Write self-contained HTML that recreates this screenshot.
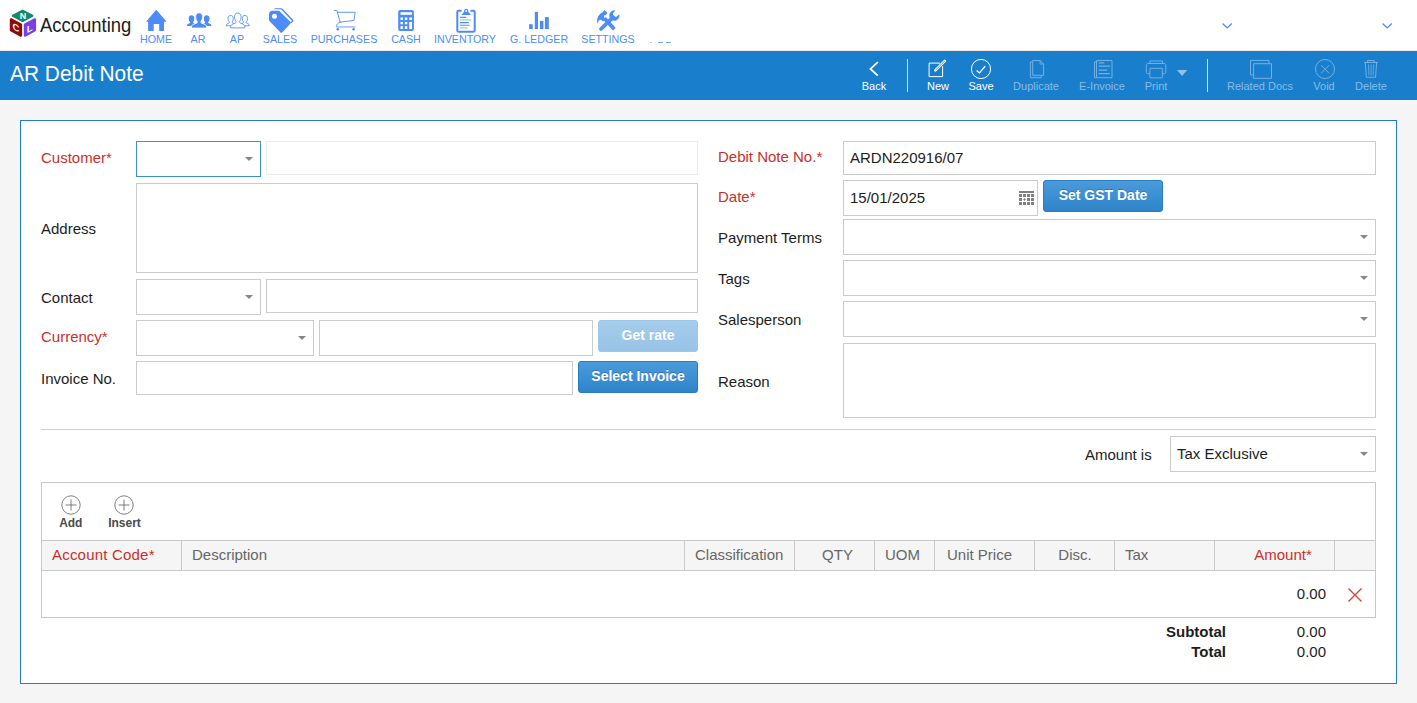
<!DOCTYPE html>
<html lang="en">
<head>
<meta charset="utf-8">
<title>AR Debit Note</title>
<style>
*{box-sizing:border-box;margin:0;padding:0}
html,body{width:1417px;height:703px;overflow:hidden}
body{background:#f5f5f5;font-family:"Liberation Sans",Arial,Helvetica,sans-serif;font-size:15px;color:#111;position:relative}
.abs{position:absolute}
/* top nav */
#nav{position:absolute;left:0;top:0;width:1417px;height:50px;background:#fff}
#brand{position:absolute;left:39.6px;top:13.1px;font-size:20.4px;line-height:24px;color:#1c1c1c;transform:scaleX(0.905);transform-origin:0 0;white-space:nowrap}
.ni{position:absolute;top:0;height:50px;color:#4d8ef7;text-align:center}
.ni svg{position:absolute;left:50%;transform:translateX(-50%)}
.ni span{position:absolute;left:50%;transform:translateX(-50%);top:33px;font-size:10.7px;line-height:13px;white-space:nowrap;letter-spacing:0}
/* blue bar */
#bar{position:absolute;left:0;top:50px;width:1417px;height:50px;background:#197ecc;border-top:1px solid #f1e8e1}
#title{position:absolute;left:9.7px;top:9.7px;color:#fff;font-size:22.6px;line-height:26px;transform:scaleX(0.925);transform-origin:0 0;white-space:nowrap}
.tb{position:absolute;top:0;height:49px;color:#fff}
.tb span{position:absolute;left:50%;transform:translateX(-50%);top:28px;font-size:11px;line-height:14px;white-space:nowrap}
.tb svg{position:absolute;left:50%;transform:translateX(-50%)}
.tb.dis{color:#86bce8}
.sep{position:absolute;top:8px;width:1px;height:33px;background:#cfe3f4}
/* panel */
#panel{position:absolute;left:20px;top:120px;width:1377px;height:564px;background:#fff;border:1px solid #1f7dcb}
.lbl{position:absolute;font-size:15px;line-height:18px;color:#1d1d1d;white-space:nowrap}
.req{color:#c9302c}
.inp{position:absolute;background:#fff;border:1px solid #cbcbcb;font-size:15px;color:#1d1d1d;line-height:18px}
.inp .v{position:absolute;left:6px;top:50%;transform:translateY(-50%);white-space:nowrap}
.arrow{position:absolute;right:7px;top:50%;margin-top:-2px;width:0;height:0;border-left:4.2px solid transparent;border-right:4.2px solid transparent;border-top:4.5px solid #868686}
.btn{position:absolute;background:#2e86cf;border:1px solid #2a7cc2;border-radius:3px;color:#fff;font-weight:bold;font-size:14px;text-align:center;line-height:28px;background-image:linear-gradient(#4a9bdb,#2e84ca);text-shadow:0 -1px 0 rgba(0,0,0,.2)}
.btn.dis{background:#9cc6e8;border-color:#9cc7e9;background-image:linear-gradient(#a5cdec,#98c3e6);text-shadow:0 -1px 0 rgba(0,0,0,.08)}
.hc{position:absolute;top:541px;height:29px;border-left:1px solid #c9c9c9;font-size:15px;line-height:28px;color:#666;white-space:nowrap}
.hc.req{color:#c9302c}
</style>
</head>
<body>
<div id="nav">

  <svg class="abs" style="left:8px;top:8px" width="30" height="32" viewBox="8 8 30 32">
    <path d="M13 15.800 L22.650 10.750 L32.300 15.800 L22.650 20.850 Z" fill="#148a68" stroke="#148a68" stroke-width="2.400" stroke-linejoin="round"/>
    <path d="M11 19.400 L20.900 24.600 L20.900 35.600 L11 30.200 Z" fill="#8f0a0a" stroke="#8f0a0a" stroke-width="2.400" stroke-linejoin="round"/>
    <path d="M34.900 19.400 L25 24.600 L25 35.600 L34.900 30.200 Z" fill="#7a40e2" stroke="#7a40e2" stroke-width="2.400" stroke-linejoin="round"/>
    <text x="22.900" y="18.900" font-family="Liberation Sans, sans-serif" font-size="9" font-weight="bold" fill="#fff" text-anchor="middle">N</text>
    <text transform="matrix(1 0.530 0 1 16 30.700)" x="0" y="0" font-family="Liberation Sans, sans-serif" font-size="9.500" font-weight="bold" fill="#fff" text-anchor="middle">C</text>
    <text transform="matrix(1 -0.530 0 1 29.700 31.600)" x="0" y="0" font-family="Liberation Sans, sans-serif" font-size="9.500" font-weight="bold" fill="#fff" text-anchor="middle">L</text>
  </svg>
  <div id="brand">Accounting</div>

  <div class="ni" style="left:136px;width:40px"><svg style="top:9px" width="24" height="23" viewBox="144 9 24 23"><path d="M156.3 9.8 L166.6 21.8 L164 21.8 L164 30.9 L159.2 30.9 L159.2 24 L153.7 24 L153.7 30.9 L148.1 30.9 L148.1 21.8 L146 21.8 Z" fill="#4d8cf6"/></svg><span>HOME</span></div>

  <div class="ni" style="left:178px;width:40px"><svg style="top:11px;margin-left:0.5px" width="26" height="18" viewBox="185.5 11 26 18"><g fill="#4d8cf6"><path d="M191 15.3 C192.8 15.3 193.8 16.6 193.8 18.4 C193.8 19.9 193.4 21 192.8 21.9 C192.5 22.4 192.6 22.9 193.1 23.2 L195 24 L192 25.9 H186.4 C186.4 24.7 186.9 24.1 187.9 23.7 L189.3 23.100 C189.8 22.8 189.7 22.3 189.4 21.9 C188.7 21 188.2 19.9 188.2 18.4 C188.2 16.6 189.2 15.3 191 15.3 Z"/><path d="M 206.2 15.3 C 204.4 15.3 203.4 16.6 203.4 18.4 C 203.4 19.9 203.8 21 204.4 21.9 C 204.7 22.4 204.6 22.9 204.1 23.2 L 202.2 24 L 205.2 25.9 H 210.8 C 210.8 24.7 210.3 24.1 209.3 23.7 L 207.9 23.1 C 207.4 22.8 207.5 22.3 207.8 21.9 C 208.5 21 209 19.9 209 18.4 C 209 16.6 208 15.3 206.2 15.3 Z"/><path d="M198.6 12.8 C201 12.8 202.1 14.6 202.1 16.8 C202.1 18.8 201.4 20.3 200.5 21.3 C200.2 21.7 200.2 22.6 200.9 22.9 L204.5 24.5 C205.700 25 206.2 25.8 206.2 27 V28.1 H191 V27 C191 25.8 191.5 25 192.7 24.5 L196.3 22.9 C197 22.6 197 21.7 196.7 21.3 C195.8 20.3 195.1 18.8 195.1 16.8 C195.1 14.6 196.2 12.8 198.6 12.8 Z" stroke="#fff" stroke-width="0.9"/></g></svg><span>AR</span></div>

  <div class="ni" style="left:217px;width:40px"><svg style="top:11px;margin-left:0.5px" width="26" height="18" viewBox="185.5 11 26 18"><g fill="#fff" stroke="#4d8cf6" stroke-width="0.9" transform="translate(198.300 20.500) scale(0.940 0.970) translate(-198.600 -20.500)"><path d="M191 15.3 C192.8 15.3 193.8 16.6 193.8 18.4 C193.8 19.9 193.4 21 192.8 21.9 C192.5 22.4 192.6 22.9 193.1 23.2 L195 24 L192 25.9 H186.4 C186.4 24.7 186.9 24.1 187.9 23.7 L189.3 23.100 C189.8 22.8 189.7 22.3 189.4 21.9 C188.7 21 188.2 19.9 188.2 18.4 C188.2 16.6 189.2 15.3 191 15.3 Z"/><path d="M 206.2 15.3 C 204.4 15.3 203.4 16.6 203.4 18.4 C 203.4 19.9 203.8 21 204.4 21.9 C 204.7 22.4 204.6 22.9 204.1 23.2 L 202.2 24 L 205.2 25.9 H 210.8 C 210.8 24.7 210.3 24.1 209.3 23.7 L 207.9 23.1 C 207.4 22.8 207.5 22.3 207.8 21.9 C 208.5 21 209 19.9 209 18.4 C 209 16.6 208 15.3 206.2 15.3 Z"/><path d="M198.6 12.8 C201 12.8 202.1 14.6 202.1 16.8 C202.1 18.8 201.4 20.3 200.5 21.3 C200.2 21.7 200.2 22.6 200.9 22.9 L204.5 24.5 C205.700 25 206.2 25.8 206.2 27 V28.1 H191 V27 C191 25.8 191.5 25 192.7 24.5 L196.3 22.9 C197 22.6 197 21.7 196.7 21.3 C195.8 20.3 195.1 18.8 195.1 16.8 C195.1 14.6 196.2 12.8 198.6 12.8 Z"/></g></svg><span>AP</span></div>

  <div class="ni" style="left:260px;width:40px"><svg style="top:7px;margin-left:0.5px" width="28" height="27" viewBox="266.500 7 28 27"><g fill="#4d8cf6">
    <path d="M274.600 8.300h6c.7 0 1.200.2 1.700.7l10.300 10.800c.5.500.5 1.200 0 1.700l-1.700 1.700-.9-.9 1.500-1.600-10.400-10.900c-.4-.4-.8-.600-1.400-.600h-6.400z"/>
    <path d="M271.800 10.800h6.100c.6 0 1.100.2 1.500.6l10.600 10.600c.5.500.5 1.100 0 1.600l-8.300 8.800c-.5.500-1.200.5-1.700 0l-10.600-10.800c-.6-.6-.9-1.300-.9-2.100v-5.400c0-1.900 1.400-3.300 3.300-3.300z"/>
    </g><circle cx="274" cy="16.200" r="2.500" fill="#fff"/></svg><span>SALES</span></div>

  <div class="ni" style="left:314px;width:60px"><svg style="top:8px;margin-left:0.5px" width="26" height="24" viewBox="331.500 8 26 24"><g fill="none" stroke="#4d8cf6" stroke-width="1" stroke-linejoin="round" stroke-linecap="round">
    <path d="M333.800 10.400h2.600l3.200 11.800 13.900-1.800 1.200-8.100h-17.700" stroke-width="0.9"/>
    <path d="M339.600 22.200c-2.200.8-3.700 2.300-3.800 4.300" stroke-width="0.9"/>
    <path d="M335.800 26.900h19" stroke="#a3c3fa" stroke-width="1.600" stroke-linecap="butt"/>
    </g><circle cx="337.300" cy="29.200" r="1.300" fill="#4d8cf6"/><circle cx="353.100" cy="29.200" r="1.300" fill="#4d8cf6"/></svg><span>PURCHASES</span></div>

  <div class="ni" style="left:386px;width:40px"><svg style="top:9px" width="18" height="23" viewBox="397 9 18 23"><rect x="398.200" y="9.900" width="15.700" height="21" rx="2" fill="#4d8cf6"/><g fill="#fff"><rect x="400.500" y="12.200" width="11.500" height="2.600"/><rect x="400.500" y="17.500" width="2.400" height="2.400"/><rect x="404.800" y="17.500" width="2.500" height="2.400"/><rect x="409.200" y="17.500" width="2.800" height="2.400"/><rect x="400.500" y="21.900" width="2.400" height="2.400"/><rect x="404.800" y="21.900" width="2.500" height="2.400"/><rect x="409.200" y="21.900" width="2.800" height="7.100"/><rect x="400.500" y="26.200" width="2.400" height="2.800"/><rect x="404.800" y="26.200" width="2.500" height="2.800"/></g></svg><span>CASH</span></div>

  <div class="ni" style="left:435px;width:60px"><svg style="top:7px;margin-left:1px" width="22" height="27" viewBox="454.400 7 22 27"><g fill="none" stroke="#4d8cf6">
    <path d="M461 10.800h-3c-.8 0-1.300.5-1.300 1.300v18.300c0 .8.500 1.300 1.300 1.300h14.800c.8 0 1.300-.5 1.300-1.300v-18.300c0-.8-.5-1.300-1.300-1.300h-3" stroke-width="2"/>
    <path d="M459.200 17.400h6.400M459.200 22.600h9M459.200 25.300h9.800" stroke-width="1.100"/>
    <path d="M459.200 19.900h11M459.200 27.900h7.600" stroke="#a3c3fa" stroke-width="1.400"/></g>
    <path d="M460.800 14.900l2.700-3.200c-.2-2 .8-3 2.100-3s2.300 1 2.100 3l2.700 3.200z M465.600 10a.9.900 0 1 0 0 1.800.9.900 0 0 0 0-1.800z" fill="#4d8cf6" fill-rule="evenodd"/></svg><span>INVENTORY</span></div>

  <div class="ni" style="left:509px;width:60px"><svg style="top:11px;margin-left:0.200px" width="22" height="19" viewBox="528.200 11 22 19"><g fill="#4d8cf6"><rect x="529.300" y="24.200" width="3.600" height="4.900"/><rect x="535" y="11.900" width="3.200" height="17.200"/><rect x="540.100" y="20.900" width="3.500" height="8.200"/><rect x="545.100" y="17.100" width="3.900" height="12"/></g></svg><span>G. LEDGER</span></div>

  <div class="ni" style="left:578px;width:60px"><svg style="top:8px;margin-left:-0.1px" width="26" height="25" viewBox="595.500 8 26 25"><g fill="#4d8cf6">
<path d="M598.200 23.700 C596.900 20.800 597.600 16.900 600.500 14.100 C601.700 12.900 602.900 12.500 603.500 12.300 L604.800 10 L608 12.800 L606.300 14.900 L604.500 15.500 C603.900 16.600 604.600 17.600 606.200 18.800 L603.600 21.600 C602 19.600 600.400 19 599.400 20.400 C598.800 21.300 598.500 22.500 598.200 23.700 Z"/>
<path d="M615.800 10.200 C612.500 9.800 609.600 12.400 609.800 15.800 C609.900 17 610.200 17.800 610.600 18.400 L613 20.600 C614.200 20.900 616 20.800 617.400 19.900 C619.400 18.700 620.400 16.400 619.800 14.200 L616.600 16.900 C615 16.600 613.700 15.400 613.400 13.600 Z"/>
</g><g stroke="#4d8cf6" stroke-width="3.800" fill="none"><path d="M604.900 18.200 L614.800 29.300"/><path d="M611.800 18.900 L601.500 29" stroke-linecap="round"/></g></svg><span>SETTINGS</span></div>

  <div class="abs" style="left:650px;top:42px;width:2px;height:1px;background:#a9c8fb"></div><div class="abs" style="left:658px;top:42px;width:5px;height:1px;background:#6fa2f8"></div><div class="abs" style="left:666px;top:42px;width:5px;height:1px;background:#6fa2f8"></div>
  <svg class="abs" style="left:1221px;top:21px" width="12" height="9" viewBox="0 0 12 9"><path d="M1.600 2.500l4.600 4.400 4.600-4.400" fill="none" stroke="#4d8cf6" stroke-width="1.300"/></svg>
  <svg class="abs" style="left:1380.700px;top:21px" width="12" height="9" viewBox="0 0 12 9"><path d="M1.600 2.500l4.600 4.400 4.600-4.400" fill="none" stroke="#4d8cf6" stroke-width="1.300"/></svg>
</div>
<div id="bar">
  <div id="title">AR Debit Note</div>
  <div class="tb" style="left:854px;width:40px"><svg style="top:9px" width="12" height="18" viewBox="868 60 12 18"><path d="M877.800 62.200l-7.300 6.700 7.300 6.700" fill="none" stroke="#fff" stroke-width="1.800"/></svg><span>Back</span></div>
  <div class="sep" style="left:907px"></div>
  <div class="tb" style="left:918px;width:40px"><svg style="top:8px;margin-left:-0.8px" width="20" height="20" viewBox="927.500 59 20 20"><g fill="none" stroke="#fff"><path d="M940.500 63.100h-10.900v13.500h13.500v-10.500" stroke-width="1"/><path d="M935.800 70.400l9.600-9.600" stroke-width="2.600" stroke-linecap="round"/><path d="M936.300 69.900l8.600-8.600" stroke="#197ecc" stroke-width="0.800"/></g></svg><span>New</span></div>
  <div class="tb" style="left:961px;width:40px"><svg style="top:7px;margin-left:-0.400px" width="22" height="22" viewBox="969.600 57.900 22 22"><g fill="none" stroke="#fff"><circle cx="980.600" cy="68.900" r="9.600" stroke-width="1"/><path d="M976.200 70.300l2.800 2.500 5.800-6.600" stroke-width="1.300"/></g></svg><span>Save</span></div>
  <div class="tb dis" style="left:1016px;width:40px"><svg style="top:8px;margin-left:1px" width="16" height="20" viewBox="1028.800 59 16 20"><g fill="none" stroke="#73b1e3" stroke-width="1"><path d="M1032.500 60.500h7.400l3.500 3.500v11.300h-10.900z"/><path d="M1039.900 60.500v3.500h3.500"/><path d="M1032.500 62h-2.300v15.700h10.800v-2.400"/></g></svg><span>Duplicate</span></div>
  <div class="tb dis" style="left:1082px;width:40px"><svg style="top:8px;margin-left:0.8px" width="20" height="20" viewBox="1092.500 59 20 20"><g fill="none" stroke="#73b1e3" stroke-width="1"><path d="M1096 60.500h15.500v17.200h-15.500z"/><path d="M1096 62h-2v15.700h2"/><path d="M1098.200 62.800h5.600M1098.200 66.100h11.200M1098.200 70.100h8.400M1098.200 73.600h11.200" stroke-width="1.200"/></g></svg><span>E-Invoice</span></div>
  <div class="tb dis" style="left:1136px;width:40px"><svg style="top:8px;margin-left:0.300px" width="22" height="21" viewBox="1145.500 58.500 22 21"><g fill="none" stroke="#73b1e3" stroke-width="1"><path d="M1150.400 63v-2.500h12.700v2.500"/><path d="M1150.400 73.200h-2.100c-.9 0-1.500-.6-1.500-1.500v-7.200c0-.9.600-1.500 1.500-1.500h16.500c.9 0 1.500.6 1.500 1.500v7.200c0 .9-.6 1.500-1.500 1.500h-2"/><path d="M1150.400 67.800h12.400v9.600h-12.400z"/></g></svg><span>Print</span></div>
  <svg class="abs" style="left:1176px;top:18px" width="12" height="8" viewBox="1176 69 12 8"><path d="M1177 70.100h10.200l-5.100 6z" fill="#8fc1ea"/></svg>
  <div class="sep" style="left:1207px"></div>
  <div class="tb dis" style="left:1240px;width:40px"><svg style="top:7.8px;margin-left:0.9px" width="24" height="21" viewBox="1248.700 58.500 24 21"><g fill="none" stroke="#73b1e3" stroke-width="1"><path d="M1253.300 74.400h-3.100v-14.500h18.400v3.300"/><path d="M1253.300 63.200h17.900v14.600h-17.900z"/></g></svg><span>Related Docs</span></div>
  <div class="tb dis" style="left:1304px;width:40px"><svg style="top:7px;margin-left:0.8px" width="22" height="22" viewBox="1313.200 57.900 22 22"><g fill="none" stroke="#73b1e3" stroke-width="1"><circle cx="1324.200" cy="68.900" r="9.500"/><path d="M1320.200 65l8.200 8.200M1328.400 65l-8.200 8.200"/></g></svg><span>Void</span></div>
  <div class="tb dis" style="left:1351px;width:40px"><svg style="top:8px;margin-left:0" width="16" height="20" viewBox="1363 59 16 20"><g fill="none" stroke="#73b1e3" stroke-width="1"><path d="M1364 62.500h13.900"/><path d="M1367.500 62.500v-2h6.800v2"/><path d="M1365.300 62.500l1 14.800h9.300l1-14.800"/><path d="M1368.500 64.500l.4 11M1371 64.500v11M1373.500 64.500l-.4 11" stroke-width="0.800"/></g></svg><span>Delete</span></div>
</div>
<div id="panel"></div>
<!-- left column -->
<div class="lbl req" style="left:41px;top:149px">Customer*</div>
<div class="inp" style="left:136px;top:141px;width:125px;height:36px;border-color:#3b8fd6"><i class="arrow"></i></div>
<div class="inp" style="left:266px;top:141px;width:432px;height:34px;border-color:#ececec"></div>
<div class="lbl" style="left:41px;top:220px">Address</div>
<div class="inp" style="left:136px;top:183px;width:562px;height:90px"></div>
<div class="lbl" style="left:41px;top:289px">Contact</div>
<div class="inp" style="left:136px;top:279px;width:125px;height:36px"><i class="arrow"></i></div>
<div class="inp" style="left:266px;top:279px;width:432px;height:34px"></div>
<div class="lbl req" style="left:41px;top:328px">Currency*</div>
<div class="inp" style="left:136px;top:320px;width:178px;height:36px"><i class="arrow"></i></div>
<div class="inp" style="left:319px;top:320px;width:274px;height:36px"></div>
<div class="btn dis" style="left:598px;top:320px;width:100px;height:32px">Get rate</div>
<div class="lbl" style="left:41px;top:370px">Invoice No.</div>
<div class="inp" style="left:136px;top:361px;width:437px;height:34px"></div>
<div class="btn" style="left:578px;top:361px;width:120px;height:32px">Select Invoice</div>
<!-- right column -->
<div class="lbl req" style="left:718px;top:148px">Debit Note No.*</div>
<div class="inp" style="left:843px;top:141px;width:533px;height:34px"><span class="v">ARDN220916/07</span></div>
<div class="lbl req" style="left:718px;top:188px">Date*</div>
<div class="inp" style="left:843px;top:180px;width:195px;height:36px"><span class="v">15/01/2025</span></div>
<svg class="abs" style="left:1019px;top:191px" width="15" height="14" viewBox="0 0 15 14"><g fill="#808080"><rect x="0" y="0" width="15" height="2"/><rect x="0" y="3" width="3" height="3"/><rect x="4" y="3" width="3" height="3"/><rect x="8" y="3" width="3" height="3"/><rect x="12" y="3" width="3" height="3"/><rect x="0" y="7" width="3" height="3"/><path d="M5.5 7l1.500 1.500-1.500 1.500-1.500-1.500z"/><rect x="8" y="7" width="3" height="3"/><rect x="12" y="7" width="3" height="3"/><rect x="0" y="11" width="3" height="3"/><rect x="4" y="11" width="3" height="3"/><rect x="8" y="11" width="3" height="3"/><rect x="12" y="11" width="3" height="3"/></g></svg>
<div class="btn" style="left:1043px;top:180px;width:120px;height:32px">Set GST Date</div>
<div class="lbl" style="left:718px;top:229px">Payment Terms</div>
<div class="inp" style="left:843px;top:219px;width:533px;height:36px"><i class="arrow"></i></div>
<div class="lbl" style="left:718px;top:270px">Tags</div>
<div class="inp" style="left:843px;top:260px;width:533px;height:36px"><i class="arrow"></i></div>
<div class="lbl" style="left:718px;top:311px">Salesperson</div>
<div class="inp" style="left:843px;top:301px;width:533px;height:36px"><i class="arrow"></i></div>
<div class="lbl" style="left:718px;top:373px">Reason</div>
<div class="inp" style="left:843px;top:343px;width:533px;height:75px"></div>
<div class="abs" style="left:41px;top:429px;width:1335px;height:1px;background:#cfcfcf"></div>
<div class="lbl" style="left:1085px;top:446px">Amount is</div>
<div class="inp" style="left:1170px;top:436px;width:206px;height:36px"><span class="v">Tax Exclusive</span><i class="arrow"></i></div>
<!-- grid -->
<div class="abs" style="left:41px;top:482px;width:1335px;height:136px;border:1px solid #c9c9c9;background:#fff"></div>
<div class="abs" style="left:42px;top:540px;width:1333px;height:31px;background:#f5f5f5;border-top:1px solid #c9c9c9;border-bottom:1px solid #c9c9c9"></div>
<svg class="abs" style="left:60.6px;top:494.7px" width="20" height="20" viewBox="0 0 20 20"><circle cx="10" cy="10" r="9.200" fill="none" stroke="#707070" stroke-width="0.9"/><path d="M10 4.500v11M4.500 10h11" stroke="#707070" stroke-width="0.9" fill="none"/></svg>
<div class="abs" style="left:40.8px;top:516px;width:60px;text-align:center;font-size:12px;font-weight:bold;color:#4a4a4a;line-height:15px">Add</div>
<svg class="abs" style="left:114.300px;top:494.7px" width="20" height="20" viewBox="0 0 20 20"><circle cx="10" cy="10" r="9.200" fill="none" stroke="#707070" stroke-width="0.9"/><path d="M10 4.500v11M4.500 10h11" stroke="#707070" stroke-width="0.9" fill="none"/></svg>
<div class="abs" style="left:94.5px;top:516px;width:60px;text-align:center;font-size:12px;font-weight:bold;color:#4a4a4a;line-height:15px">Insert</div>
<div class="hc req" style="left:42px;width:140px;padding-left:10px;border-left:0;letter-spacing:0.2px">Account Code*</div>
<div class="hc" style="left:181px;width:504px;padding-left:10px">Description</div>
<div class="hc" style="left:684px;width:111px;padding-left:10px">Classification</div>
<div class="hc" style="left:794px;width:81px;text-align:center;padding-left:5px">QTY</div>
<div class="hc" style="left:874px;width:61px;padding-left:10px">UOM</div>
<div class="hc" style="left:934px;width:101px;padding-left:12px">Unit Price</div>
<div class="hc" style="left:1034px;width:81px;text-align:center">Disc.</div>
<div class="hc" style="left:1114px;width:101px;padding-left:10px">Tax</div>
<div class="hc req" style="left:1214px;width:121px;text-align:center;padding-left:16px">Amount*</div>
<div class="hc" style="left:1334px;width:41px"></div>
<div class="lbl" style="left:1226px;top:585px;width:100px;text-align:right">0.00</div>
<svg class="abs" style="left:1347px;top:587px" width="16" height="16" viewBox="0 0 16 16"><path d="M1.5 1.5l13 13M14.5 1.5l-13 13" stroke="#d9423c" stroke-width="1.4" fill="none"/></svg>
<div class="lbl" style="left:1126px;top:623px;width:100px;text-align:right;font-weight:bold">Subtotal</div>
<div class="lbl" style="left:1226px;top:623px;width:100px;text-align:right">0.00</div>
<div class="lbl" style="left:1126px;top:643px;width:100px;text-align:right;font-weight:bold">Total</div>
<div class="lbl" style="left:1226px;top:643px;width:100px;text-align:right">0.00</div>

</body>
</html>
